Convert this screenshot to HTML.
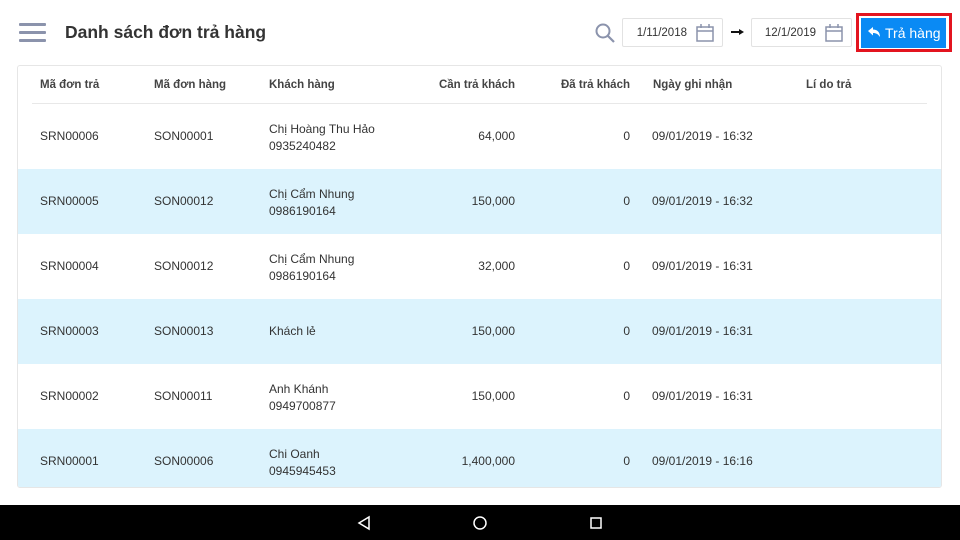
<!DOCTYPE html>
<html><head><meta charset="utf-8"><style>
*{margin:0;padding:0;box-sizing:border-box}
body{width:960px;height:540px;background:#fff;font-family:"Liberation Sans","Noto Sans CJK SC",sans-serif;position:relative;overflow:hidden;color:#333}
.abs{position:absolute}
.title{left:65px;top:22px;font-size:17.5px;font-weight:bold;color:#333}
.date{top:18px;height:29px;border:1px solid #e2e2e2;border-radius:2px;font-size:11.5px;color:#333}
.date span{position:absolute;right:35px;top:8px}
.card{left:17px;top:65px;width:925px;height:423px;border:1px solid #e6e6e6;border-radius:3px;overflow:hidden}
.row{position:absolute;left:0;width:923px;height:65px;font-size:12px;color:#333}
.row.b{background:#dcf3fd}
.c{position:absolute}
.hd{font-size:11.5px;font-weight:bold;color:#444}
</style></head><body>
<div class="abs" style="left:19px;top:23px;width:27px;height:3px;background:#8b93ac;border-radius:1px"></div>
<div class="abs" style="left:19px;top:31px;width:27px;height:3px;background:#8b93ac;border-radius:1px"></div>
<div class="abs" style="left:19px;top:39px;width:27px;height:3px;background:#8b93ac;border-radius:1px"></div>
<div class="abs title">Danh sách đơn trả hàng</div>
<svg class="abs" style="left:594px;top:22px" width="22" height="22"><circle cx="9" cy="9" r="6.5" fill="none" stroke="#8b93ac" stroke-width="2"/><line x1="14" y1="14" x2="20" y2="20" stroke="#8b93ac" stroke-width="2.2"/></svg>
<div class="abs date" style="left:622px;width:101px"><span>1/11/2018</span>
<svg style="position:absolute;right:7px;top:4px" width="20" height="20"><rect x="2" y="4" width="16" height="14" fill="none" stroke="#8b93ac" stroke-width="1.5"/><line x1="2" y1="8" x2="18" y2="8" stroke="#8b93ac" stroke-width="1.5"/><line x1="6" y1="1" x2="6" y2="5" stroke="#8b93ac" stroke-width="1.5"/><line x1="14" y1="1" x2="14" y2="5" stroke="#8b93ac" stroke-width="1.5"/></svg></div>
<div class="abs" style="left:731px;top:31px;width:11px;height:2px;background:#111"></div>
<div class="abs" style="left:739px;top:29px;border-left:5px solid #111;border-top:3px solid transparent;border-bottom:3px solid transparent"></div>
<div class="abs date" style="left:751px;width:101px"><span>12/1/2019</span>
<svg style="position:absolute;right:7px;top:4px" width="20" height="20"><rect x="2" y="4" width="16" height="14" fill="none" stroke="#8b93ac" stroke-width="1.5"/><line x1="2" y1="8" x2="18" y2="8" stroke="#8b93ac" stroke-width="1.5"/><line x1="6" y1="1" x2="6" y2="5" stroke="#8b93ac" stroke-width="1.5"/><line x1="14" y1="1" x2="14" y2="5" stroke="#8b93ac" stroke-width="1.5"/></svg></div>
<div class="abs" style="left:856px;top:13px;width:96px;height:39px;border:3px solid #e3141f;background:#fff"></div>
<div class="abs" style="left:861px;top:18px;width:85px;height:30px;background:#0a8af4;color:#fff;font-size:14px;line-height:30px;padding-left:24px;white-space:nowrap">Trả hàng</div>
<svg class="abs" style="left:867px;top:26px" width="14" height="12"><path d="M1 5 L6 1 L6 3.5 C10 3.5 13 6 13 11 C11 8 9 7 6 7 L6 9.5 Z" fill="#fff"/></svg>
<div class="abs card">
 <div class="row" style="top:0;height:38px">
  <div class="c hd" style="left:22px;top:13px">Mã đơn trả</div>
  <div class="c hd" style="left:136px;top:13px">Mã đơn hàng</div>
  <div class="c hd" style="left:251px;top:13px">Khách hàng</div>
  <div class="c hd" style="right:426px;top:13px">Cần trả khách</div>
  <div class="c hd" style="right:311px;top:13px">Đã trả khách</div>
  <div class="c hd" style="left:635px;top:13px">Ngày ghi nhận</div>
  <div class="c hd" style="left:788px;top:13px">Lí do trả</div>
  <div class="c" style="left:14px;right:14px;top:37px;height:1px;background:#e8e8e8"></div>
 </div>
 <div class="row" style="top:38px"><div class="c" style="left:22px;top:25px">SRN00006</div><div class="c" style="left:136px;top:25px">SON00001</div><div class="c" style="left:251px;top:17px;line-height:17px">Chị Hoàng Thu Hảo<br>0935240482</div><div class="c" style="right:426px;top:25px">64,000</div><div class="c" style="right:311px;top:25px">0</div><div class="c" style="left:634px;top:25px">09/01/2019 - 16:32</div></div>
 <div class="row b" style="top:103px"><div class="c" style="left:22px;top:25px">SRN00005</div><div class="c" style="left:136px;top:25px">SON00012</div><div class="c" style="left:251px;top:17px;line-height:17px">Chị Cẩm Nhung<br>0986190164</div><div class="c" style="right:426px;top:25px">150,000</div><div class="c" style="right:311px;top:25px">0</div><div class="c" style="left:634px;top:25px">09/01/2019 - 16:32</div></div>
 <div class="row" style="top:168px"><div class="c" style="left:22px;top:25px">SRN00004</div><div class="c" style="left:136px;top:25px">SON00012</div><div class="c" style="left:251px;top:17px;line-height:17px">Chị Cẩm Nhung<br>0986190164</div><div class="c" style="right:426px;top:25px">32,000</div><div class="c" style="right:311px;top:25px">0</div><div class="c" style="left:634px;top:25px">09/01/2019 - 16:31</div></div>
 <div class="row b" style="top:233px"><div class="c" style="left:22px;top:25px">SRN00003</div><div class="c" style="left:136px;top:25px">SON00013</div><div class="c" style="left:251px;top:25px">Khách lẻ</div><div class="c" style="right:426px;top:25px">150,000</div><div class="c" style="right:311px;top:25px">0</div><div class="c" style="left:634px;top:25px">09/01/2019 - 16:31</div></div>
 <div class="row" style="top:298px"><div class="c" style="left:22px;top:25px">SRN00002</div><div class="c" style="left:136px;top:25px">SON00011</div><div class="c" style="left:251px;top:17px;line-height:17px">Anh Khánh<br>0949700877</div><div class="c" style="right:426px;top:25px">150,000</div><div class="c" style="right:311px;top:25px">0</div><div class="c" style="left:634px;top:25px">09/01/2019 - 16:31</div></div>
 <div class="row b" style="top:363px"><div class="c" style="left:22px;top:25px">SRN00001</div><div class="c" style="left:136px;top:25px">SON00006</div><div class="c" style="left:251px;top:17px;line-height:17px">Chi Oanh<br>0945945453</div><div class="c" style="right:426px;top:25px">1,400,000</div><div class="c" style="right:311px;top:25px">0</div><div class="c" style="left:634px;top:25px">09/01/2019 - 16:16</div></div>
</div>
<div class="abs" style="left:0;top:505px;width:960px;height:35px;background:#000"></div>
<svg class="abs" style="left:355px;top:514px" width="260" height="18"><path d="M4 9 L14 3 L14 15 Z" fill="none" stroke="#fff" stroke-width="1.5"/><circle cx="125" cy="9" r="6" fill="none" stroke="#fff" stroke-width="1.5"/><rect x="236" y="4" width="10" height="10" fill="none" stroke="#fff" stroke-width="1.5"/></svg>
</body></html>
